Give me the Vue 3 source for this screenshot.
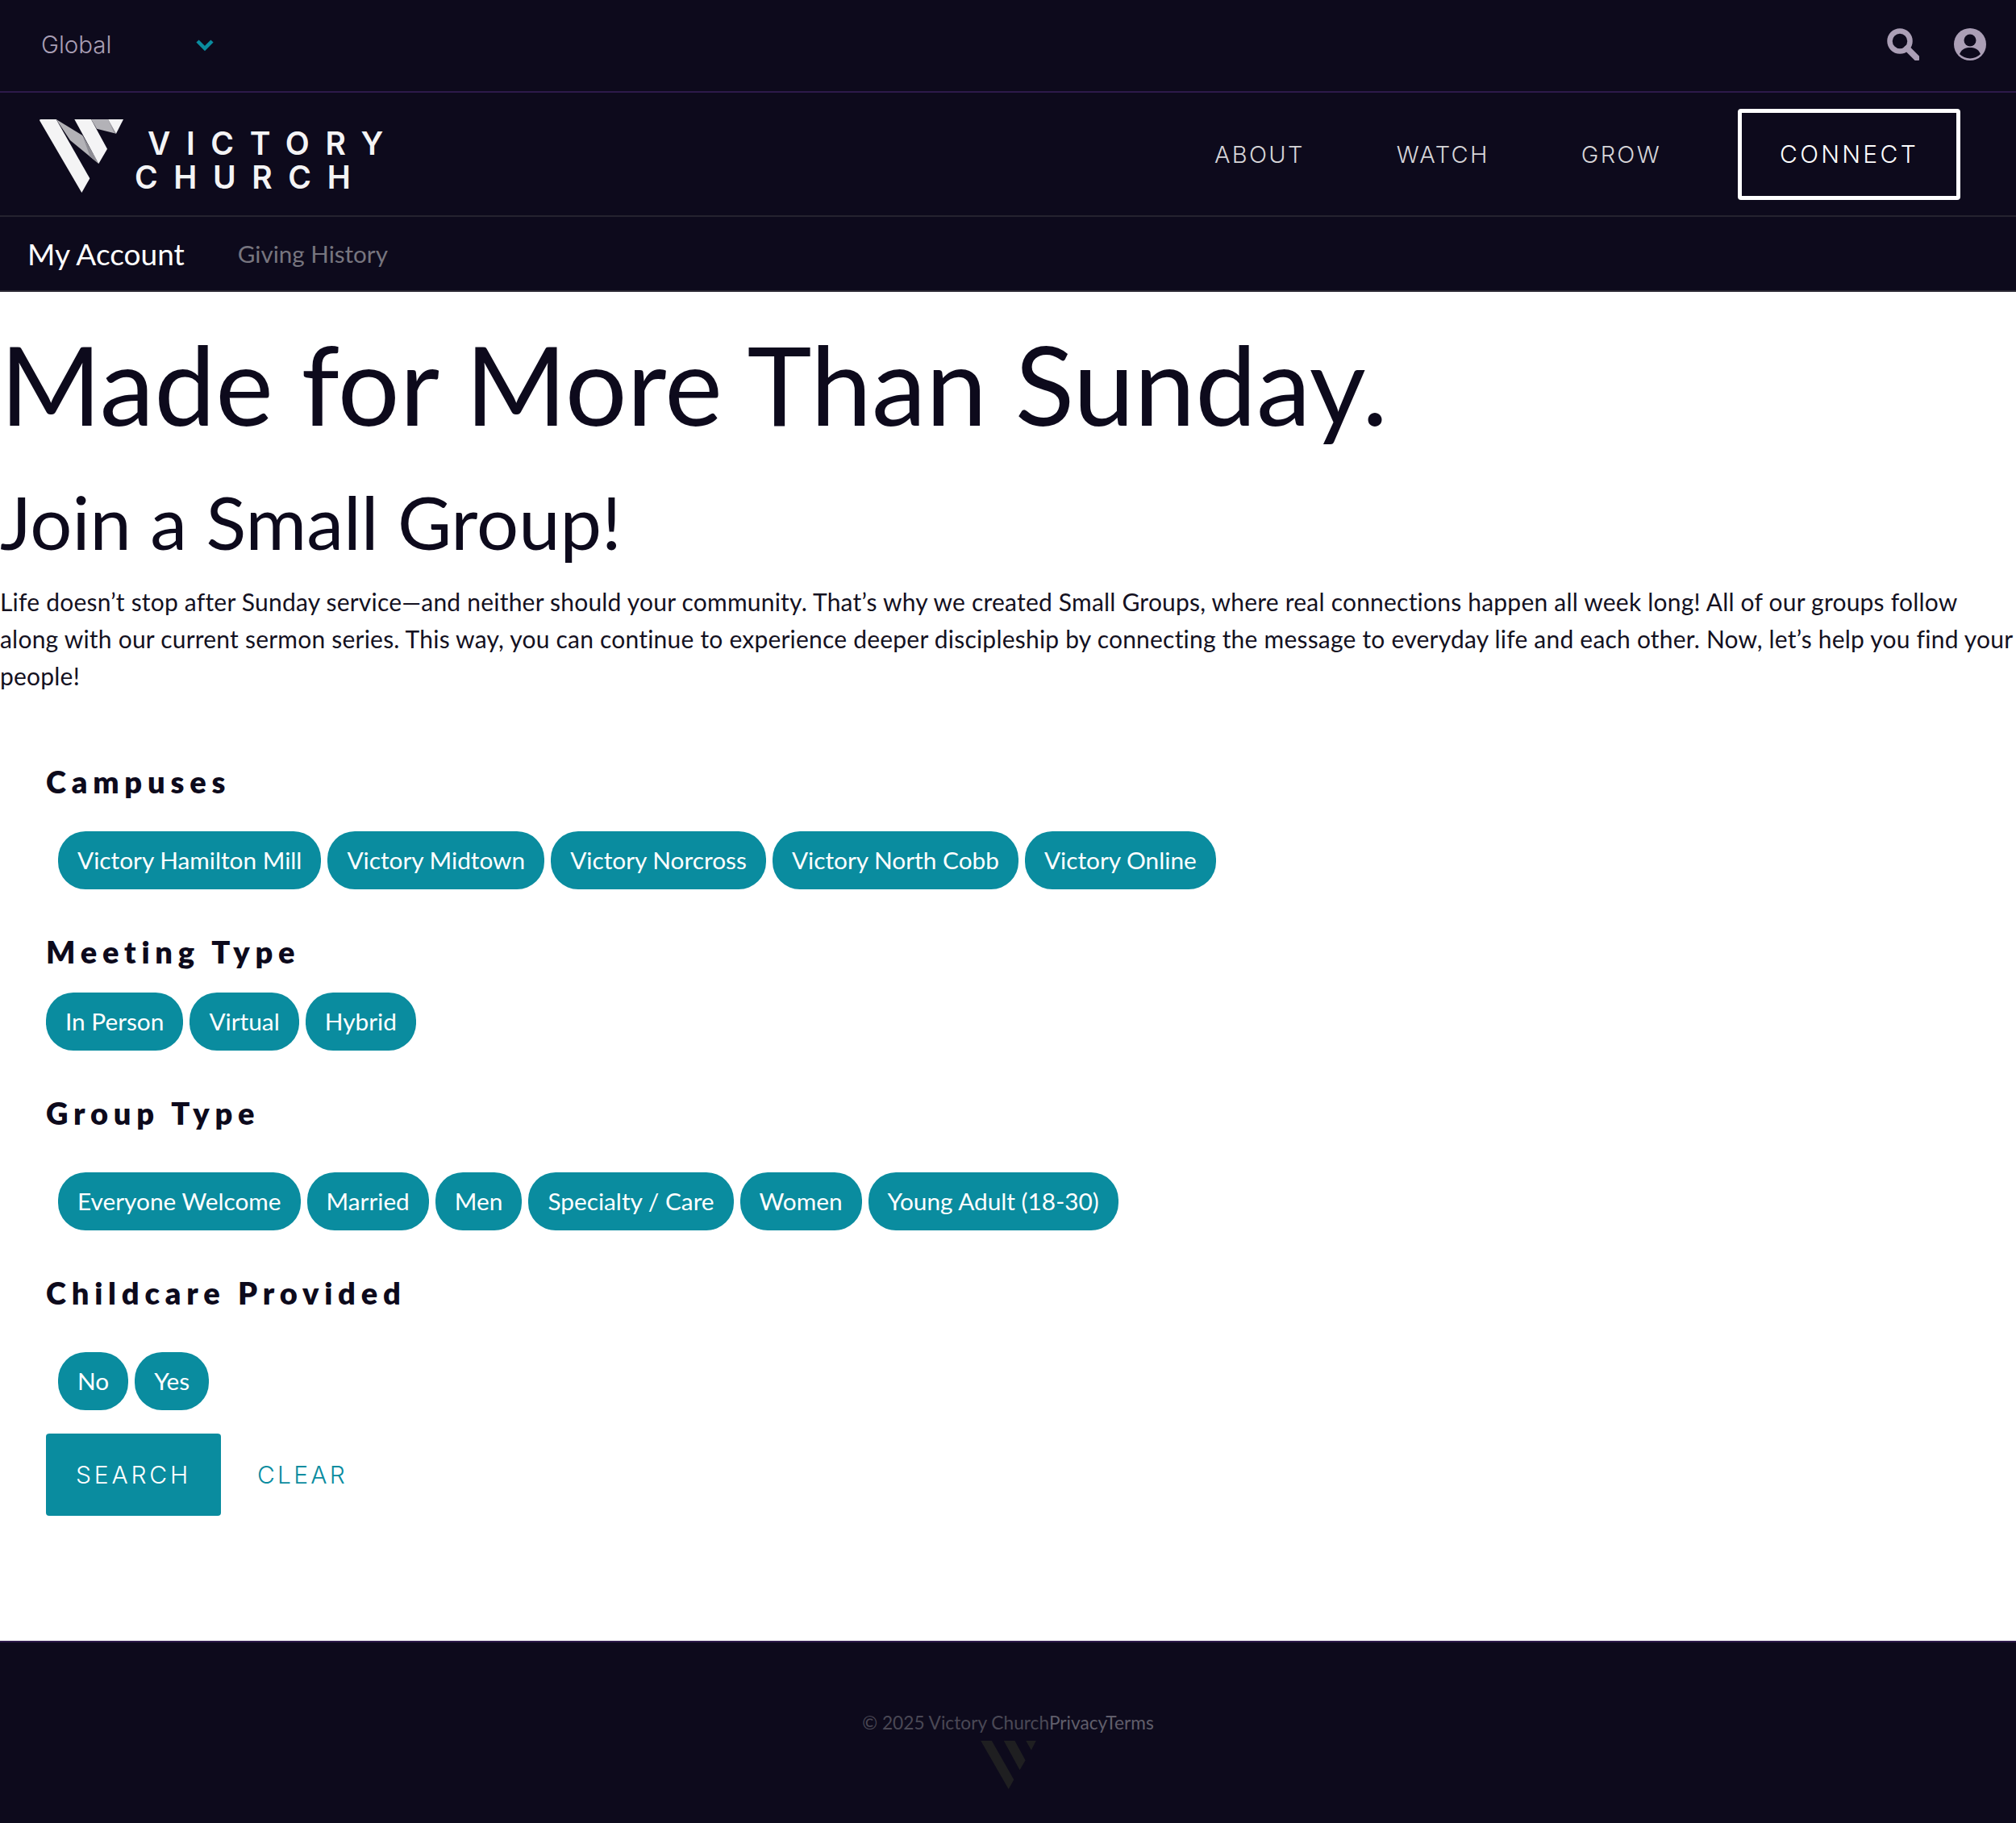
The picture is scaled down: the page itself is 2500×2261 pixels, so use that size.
<script setup>
const navLinks = ['ABOUT', 'WATCH', 'GROW']

const filters = [
  {
    title: 'Campuses',
    spacing: 'near',
    options: ['Victory Hamilton Mill', 'Victory Midtown', 'Victory Norcross', 'Victory North Cobb', 'Victory Online'],
  },
  { title: 'Meeting Type', spacing: 'flush', options: ['In Person', 'Virtual', 'Hybrid'] },
  {
    title: 'Group Type',
    spacing: 'far',
    options: ['Everyone Welcome', 'Married', 'Men', 'Specialty / Care', 'Women', 'Young Adult (18-30)'],
  },
  { title: 'Childcare Provided', spacing: 'far', options: ['No', 'Yes'] },
]
</script>

<template>
  <div class="page">
    <header class="site-header">
      <div class="top-bar">
        <div class="region">
          <span>Global</span>
          <svg class="chevron" viewBox="0 0 24 16" width="24" height="16">
            <path d="M3 3l9 9 9-9" fill="none" stroke="#0a8c9f" stroke-width="4.5" />
          </svg>
        </div>
        <div class="top-icons">
          <svg viewBox="0 0 40 40" width="40" height="40">
            <circle cx="16" cy="16" r="12.5" fill="none" stroke="#ab9fb6" stroke-width="6.5" />
            <path d="M25 25l12 12" stroke="#ab9fb6" stroke-width="7.5" stroke-linecap="round" />
          </svg>
          <svg viewBox="0 0 40 40" width="40" height="40">
            <circle cx="20" cy="20" r="20" fill="#ab9fb6" />
            <circle cx="20" cy="15" r="7.5" fill="#0d0a1c" />
            <path d="M7 32c3-7 8-8 13-8s10 1 13 8a18 18 0 0 1-26 0z" fill="#0d0a1c" />
          </svg>
        </div>
      </div>

      <div class="main-nav">
        <div class="logo">
          <svg class="logo-mark" viewBox="58 50 312 273" width="104" height="91">
            <path d="M58 54q0-4 5-4h57l125 220-30 53z" fill="#f4f4f5" />
            <path d="M120 50l98 60 60 105-106-87z" fill="#b3b2b7" />
            <path d="M218 110l60 105-32-26z" fill="#8e8d94" />
            <path d="M188 50h62l60 110-32 55z" fill="#f4f4f5" />
            <path d="M250 50h63l30 53-72-18z" fill="#b3b2b7" />
            <path d="M313 50l30 53-8-4z" fill="#8e8d94" />
            <path d="M313 50h57l-27 53z" fill="#f4f4f5" />
          </svg>
          <div class="logo-text">
            <span class="logo-line first">VICTORY</span>
            <span class="logo-line">CHURCH</span>
          </div>
        </div>
        <nav class="nav-links">
          <a v-for="link in navLinks" :key="link" class="nav-link">{{ link }}</a>
          <a class="nav-connect">CONNECT</a>
        </nav>
      </div>

      <div class="sub-nav">
        <span class="sub-title">My Account</span>
        <span class="sub-link">Giving History</span>
      </div>
    </header>

    <main class="content">
      <h1>Made for More Than Sunday.</h1>
      <h2>Join a Small Group!</h2>
      <p class="intro">
        Life doesn’t stop after Sunday service—and neither should your community. That’s why we created Small Groups, where real connections happen all week long! All of our groups follow<br />
        along with our current sermon series. This way, you can continue to experience deeper discipleship by connecting the message to everyday life and each other. Now, let’s help you find your<br />
        people!
      </p>

      <form class="filters" @submit.prevent>
        <section v-for="group in filters" :key="group.title" class="filter-group" :class="group.spacing">
          <h3>{{ group.title }}</h3>
          <div class="pills">
            <button v-for="option in group.options" :key="option" type="button" class="pill">{{ option }}</button>
          </div>
        </section>

        <div class="actions">
          <button type="submit" class="btn-search">SEARCH</button>
          <button type="button" class="btn-clear">CLEAR</button>
        </div>
      </form>
    </main>

    <footer class="site-footer">
      <div class="footer-line">
        <span>© 2025 Victory Church</span><a>Privacy</a><a>Terms</a>
      </div>
      <svg class="footer-mark" viewBox="58 50 312 273" width="69" height="60">
        <path d="M58 50h62l125 220-30 53z" fill="#1f1f21" />
        <path d="M188 50h62l60 110-32 55z" fill="#1f1f21" />
        <path d="M313 50h57l-27 53z" fill="#1f1f21" />
      </svg>
    </footer>
  </div>
</template>

<style>
html,
body {
  margin: 0;
  background: #fff;
}
</style>

<style scoped>
.page {
  width: 2500px;
  font-family: Lato, "Open Sans", sans-serif;
  font-variant-ligatures: none;
  color: #0d0a1c;
}

.site-header {
  background: #0d0a1c;
}

.top-bar {
  height: 113px;
  padding: 0 37px 0 51px;
  display: flex;
  align-items: center;
  justify-content: space-between;
  border-bottom: 2px solid #2d1a4a;
}

.region {
  display: flex;
  align-items: center;
  gap: 104px;
  margin-bottom: 3px;
  font-family: Inter, sans-serif;
  font-weight: 300;
  font-size: 29.5px;
  color: #a99fb5;
}

.chevron {
  margin-top: 2px;
}

.top-icons {
  display: flex;
  gap: 43px;
  margin-bottom: 3px;
}

.main-nav {
  height: 152px;
  padding: 0 69px 0 49px;
  display: flex;
  align-items: center;
  justify-content: space-between;
  border-bottom: 2px solid #25232f;
}

.logo {
  display: flex;
  align-items: flex-start;
  gap: 14px;
}

.logo-mark {
  margin-top: 6px;
}

.logo-text {
  padding-top: 15px;
  display: flex;
  flex-direction: column;
  font-family: Inter, sans-serif;
  font-weight: 600;
  font-size: 39px;
  line-height: 42px;
  letter-spacing: 19.6px;
  color: #f4f4f5;
  white-space: nowrap;
}

.logo-line.first {
  margin-left: 16px;
}

.nav-links {
  display: flex;
  align-items: center;
}

.nav-link {
  margin-right: 114px;
  font-family: Inter, sans-serif;
  font-weight: 300;
  font-size: 29px;
  letter-spacing: 2.3px;
  color: #d6d5d8;
}

.nav-link:nth-child(3) {
  margin-right: 95px;
}

.nav-connect {
  width: 276px;
  height: 113px;
  box-sizing: border-box;
  display: flex;
  align-items: center;
  justify-content: center;
  border: 5px solid #fff;
  border-radius: 4px;
  font-family: Inter, sans-serif;
  font-weight: 300;
  font-size: 30px;
  letter-spacing: 3.3px;
  color: #fff;
}

.sub-nav {
  height: 91px;
  padding: 0 34px;
  display: flex;
  align-items: center;
  gap: 66px;
  border-bottom: 2px solid #2a2833;
}

.sub-title {
  font-size: 37px;
  color: #fff;
}

.sub-link {
  font-size: 29.6px;
  color: #77757f;
}

.content {
  height: 1673px;
  overflow: hidden;
}

h1 {
  margin: 0;
  padding-top: 34px;
  font-size: 135.6px;
  line-height: 160px;
  font-weight: 400;
}

h2 {
  margin: 0;
  padding-top: 39px;
  font-size: 92px;
  line-height: 104px;
  font-weight: 400;
}

.intro {
  margin: 0;
  padding-top: 24px;
  font-size: 30px;
  letter-spacing: 0.21px;
  line-height: 46px;
  white-space: nowrap;
  color: #14111f;
}

.filters {
  padding: 85px 57px 0;
}

.filter-group h3 {
  margin: 0;
  font-size: 38px;
  line-height: 46px;
  font-weight: 800;
  letter-spacing: 6.8px;
}

.pills {
  display: flex;
  gap: 8px;
}

.near .pills {
  margin: 39px 0 54px 15px;
}

.flush .pills {
  margin: 28px 0 54px;
}

.far .pills {
  margin: 51px 0 54px 15px;
}

.far:last-of-type .pills {
  margin-bottom: 29px;
}

.pill {
  height: 72px;
  padding: 0 24px 2px;
  border: 0;
  border-radius: 34px;
  background: #0a8c9f;
  font-family: Lato, "Open Sans", sans-serif;
  font-variant-ligatures: none;
  font-size: 29.8px;
  color: #fff;
}

.actions {
  display: flex;
  align-items: center;
  gap: 45px;
}

.btn-search {
  width: 217px;
  height: 102px;
  border: 0;
  border-radius: 4px;
  background: #0a8c9f;
  font-family: Inter, sans-serif;
  font-weight: 300;
  font-size: 30px;
  letter-spacing: 3.8px;
  color: #fff;
}

.btn-clear {
  padding: 0;
  border: 0;
  background: none;
  font-family: Inter, sans-serif;
  font-weight: 300;
  font-size: 30px;
  letter-spacing: 3.2px;
  color: #0a8c9f;
}

.site-footer {
  height: 226px;
  box-sizing: border-box;
  padding-top: 85px;
  background: #0d0a1c;
  border-top: 2px solid #2d1a4a;
  display: flex;
  flex-direction: column;
  align-items: center;
}

.footer-line {
  font-size: 22.7px;
  line-height: 30px;
  color: #4a4855;
}

.footer-line a {
  color: #605e6b;
}

.footer-mark {
  margin-top: 7px;
}
</style>
